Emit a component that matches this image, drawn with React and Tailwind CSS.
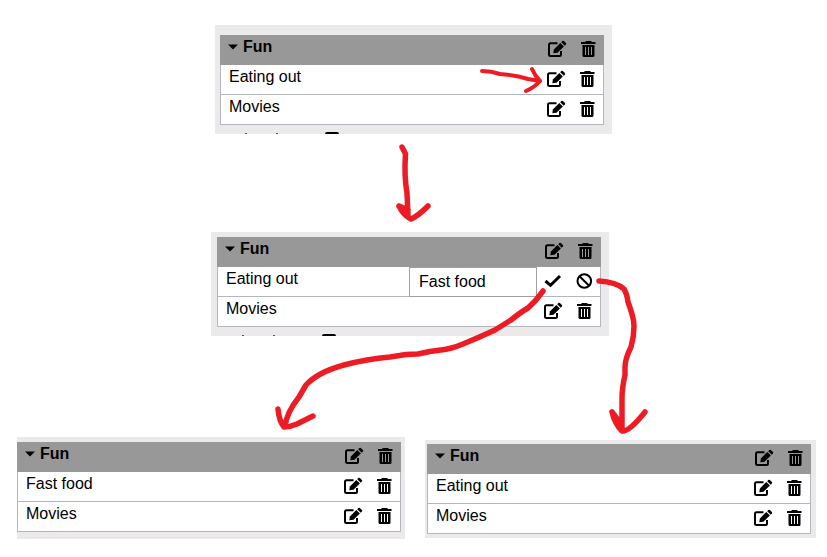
import React from "react";

function EditIcon() {
  return (
    <svg width="20" height="18" viewBox="0 0 20 18" aria-hidden="true">
      <path
        d="M10.500 3.200H3.500Q2 3.200 2 4.700V14.500Q2 16 3.500 16H12.500Q14 16 14 14.500V11"
        fill="none"
        stroke="currentColor"
        strokeWidth="2"
      />
      <path d="M6.300 13.300L6.900 9.400L13.300 3L16.900 6.500L10.500 12.700Z" fill="currentColor" />
      <path d="M14.200 2.200L15.300 1.100Q16.100 .4 16.900 1.100L18.900 3.100Q19.600 3.900 18.900 4.600L17.800 5.700Z" fill="currentColor" />
    </svg>
  );
}

function TrashIcon() {
  return (
    <svg width="16" height="18" viewBox="0 0 16 18" aria-hidden="true">
      <path d="M1 2H5.500V1H11.500V2H15.500V4H1Z" fill="currentColor" />
      <path
        fillRule="evenodd"
        d="M2.500 5H14.500V15.500Q14.500 17 13 17H4Q2.500 17 2.500 15.500ZM5 7V15H6V7ZM8 7V15H9V7ZM11 7V15H12V7Z"
        fill="currentColor"
      />
    </svg>
  );
}

function CheckIcon() {
  return (
    <svg width="20" height="18" viewBox="0 0 20 18" aria-hidden="true">
      <path d="M2.500 9L7.500 13.300L17 4" fill="none" stroke="currentColor" strokeWidth="3" />
    </svg>
  );
}

function BanIcon() {
  return (
    <svg width="16" height="18" viewBox="0 0 16 18" aria-hidden="true">
      <g fill="none" stroke="currentColor" strokeWidth="2">
        <circle cx="8.300" cy="9" r="6.800" />
        <path d="M3.500 4.200L13.100 13.800" />
      </g>
    </svg>
  );
}

function Actions({ name, editing = false }) {
  return (
    <div className="flex items-start gap-[13px] pt-[5px]">
      <button type="button" aria-label={editing ? `Save ${name}` : `Edit ${name}`}>
        {editing ? <CheckIcon /> : <EditIcon />}
      </button>
      <button type="button" aria-label={editing ? `Cancel editing ${name}` : `Delete ${name}`}>
        {editing ? <BanIcon /> : <TrashIcon />}
      </button>
    </div>
  );
}

function Category({ items, editing }) {
  return (
    <section>
      <header className="flex h-[30px] justify-between bg-[#989898] px-2">
        <button type="button" aria-expanded="true" className="flex h-6 items-center gap-[5px] font-bold">
          <svg width="10" height="6" viewBox="0 0 10 6" aria-hidden="true">
            <path d="M0 .5H10L5 5.500Z" fill="currentColor" />
          </svg>
          <h2>Fun</h2>
        </button>
        <Actions name="Fun" />
      </header>
      <ul>
        {items.map((name) => (
          <li key={name} className="flex h-[30px] border-x border-b border-[#b4b7be] bg-white px-2">
            <span className="flex-1">{name}</span>
            {editing === name && (
              <input
                aria-label={`New name for ${name}`}
                defaultValue="Fast food"
                className="mr-1.5 h-[30px] w-32 border border-[#a0a0a0] bg-white px-[9px] outline-none"
              />
            )}
            <Actions name={name} editing={editing === name} />
          </li>
        ))}
      </ul>
    </section>
  );
}

// The cropped top edge of the category that follows in the list.
function NextCategoryEdge() {
  return (
    <svg className="mt-[7px] block" width="130" height="2" viewBox="0 0 130 2" aria-hidden="true">
      <path d="M25 1H27V2H25ZM56 1H58V2H56Z" fill="#555" />
      <path d="M105 2Q105 0 107 0H117Q119 0 119 2Z" fill="#000" />
    </svg>
  );
}

function Arrows() {
  return (
    <svg
      className="pointer-events-none absolute left-0 top-0"
      width="827"
      height="557"
      viewBox="0 0 827 557"
      aria-hidden="true"
    >
      <g fill="none" stroke="#ed1c24" strokeWidth="5.500" strokeLinecap="round" strokeLinejoin="round">
        <path
          strokeWidth="4"
          d="M482 71Q491 71 500 74Q516 75 528 79L540 81M532 69Q535 76 540 81Q535 87 526 91"
        />
        <path d="M402 147L405.500 154Q404 176 407 193L408 215M399 206Q403 215 411 219Q418 216 428 206M399 206L408 210" />
        <path d="M543 291L536 300L528 308Q521 312 511 320L495 330Q480 337 463 344Q451 349 441 350Q430 351 418 354L406 354.500L390 357Q367 359 344 365Q318 372 306 385L299 397Q287 412 285 426M278 409Q279 421 284 427Q290 427 297 424L313 416" />
        <path d="M599 281Q616 282 624 289Q627 294 628 302Q634 318 634 326Q634 337 631 347Q625 359 625 367L625 375Q622 388 622 398L622 429M612 412Q615 424 622 431Q629 432 645 412M612 412L621 424" />
      </g>
    </svg>
  );
}

export default function App() {
  return (
    <div className="bg-white">
      <main className="relative mx-auto flex max-w-[827px] flex-col bg-white pb-[18px] pt-[25px] font-['Liberation_Sans',Arial,sans-serif] text-base leading-6 text-black">
        <div className="mx-auto w-full max-w-[397px] bg-[#ebe9ea] pl-[5px] pr-2 pt-[10px]">
          <Category items={["Eating out", "Movies"]} />
          <NextCategoryEdge />
        </div>
        <div className="mt-[98px] pr-[7px]">
          <div className="mx-auto w-full max-w-[398px] bg-[#ebe9ea] pl-[6px] pr-2 pt-[5px]">
            <Category items={["Eating out", "Movies"]} editing="Eating out" />
            <NextCategoryEdge />
          </div>
        </div>
        <div className="mt-[101px] flex items-start gap-5 pl-[17px] pr-[11px]">
          <div className="flex-1 bg-[#ebe9ea] pb-[7px] pr-1 pt-[5px]">
            <Category items={["Fast food", "Movies"]} />
          </div>
          <div className="mt-[3px] flex-1 bg-[#ebe9ea] pb-1 pl-[2px] pr-[5px] pt-1">
            <Category items={["Eating out", "Movies"]} />
          </div>
        </div>
        <Arrows />
      </main>
    </div>
  );
}
